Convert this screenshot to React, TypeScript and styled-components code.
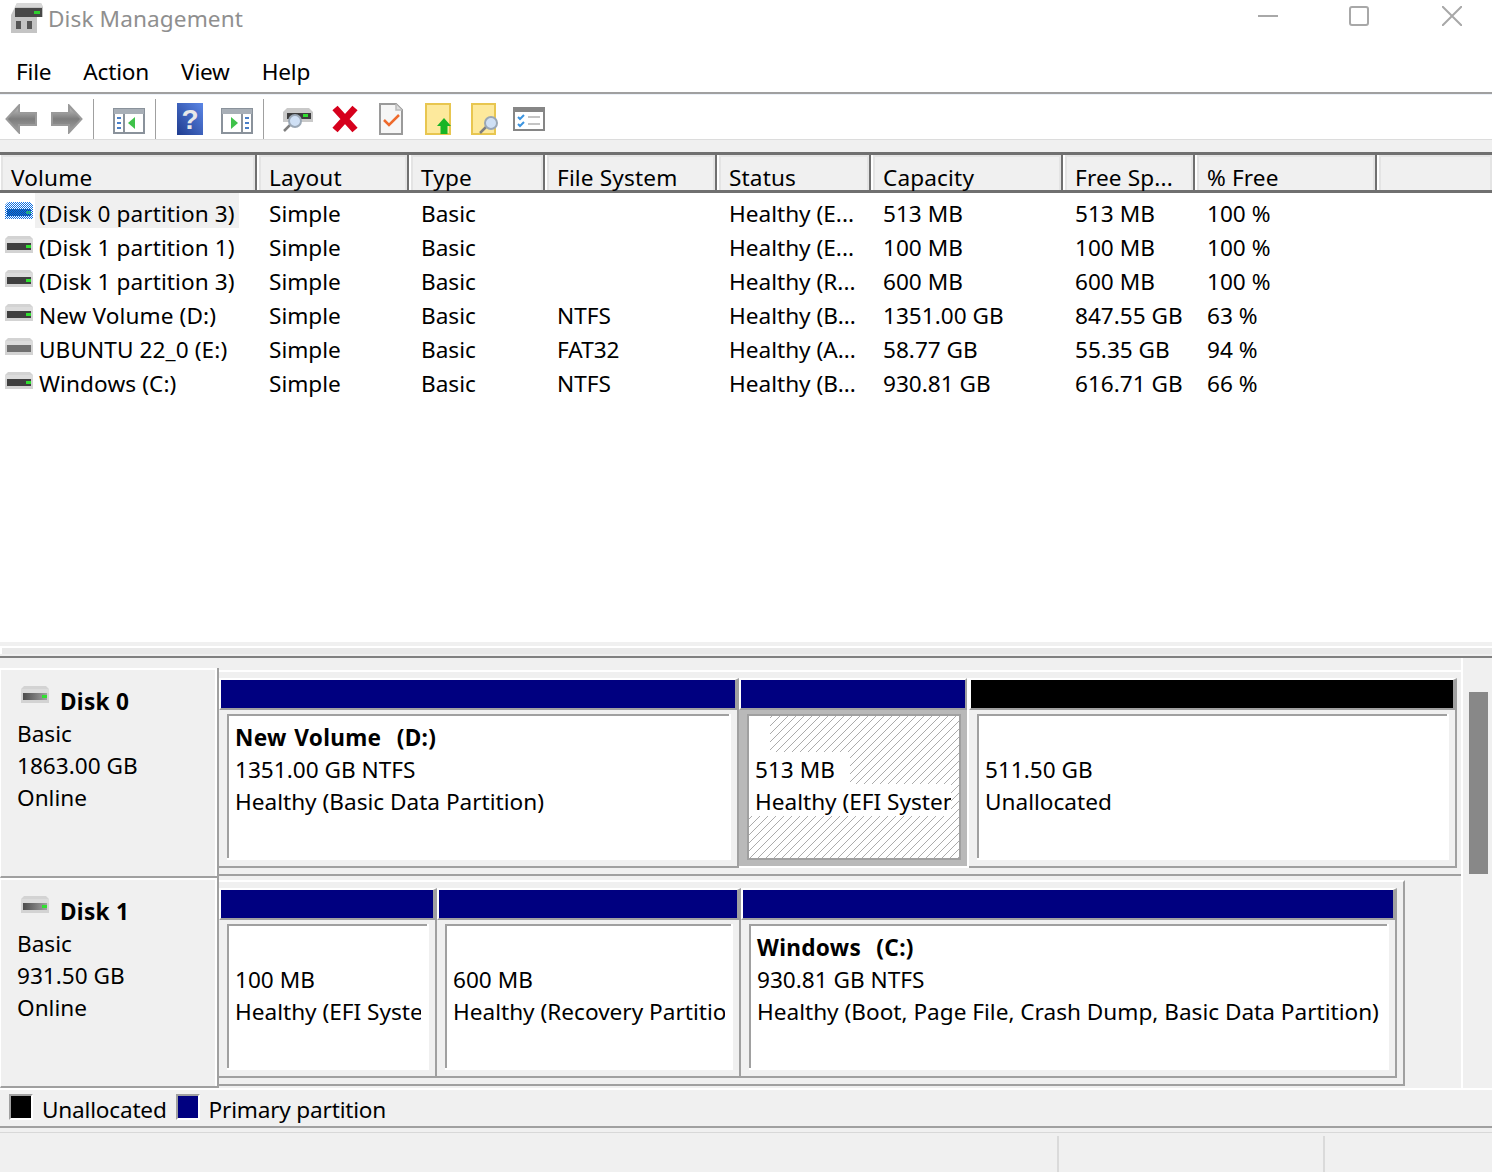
import styled, { createGlobalStyle } from "styled-components";

const GRAY = "#a0a0a0";
const FACE = "#f0f0f0";
const COLUMNS = "257px 152px 136px 172px 154px 192px 132px 182px 1fr";

const GlobalStyle = createGlobalStyle`
  html, body {
    margin: 0;
    padding: 0;
    background: #fff;
  }
  body {
    font-family: "Noto Sans", "Open Sans", sans-serif;
    font-size: 22.6px;
    color: #000;
  }
  svg {
    display: block;
  }
`;

const Window = styled.div`
  width: 1492px;
  height: 1172px;
  overflow: hidden;
  display: flex;
  flex-direction: column;
  background: ${FACE};
`;

const TitleBar = styled.div`
  height: 46px;
  box-sizing: border-box;
  padding: 3px 30px 0 11px;
  display: flex;
  align-items: flex-start;
  background: #fff;
`;

const TitleText = styled.div`
  margin-left: 5px;
  line-height: 32px;
  color: #8f8f8f;
  letter-spacing: 0.1px;
`;

const WindowControls = styled.div`
  margin: 3px 0 0 auto;
  display: flex;
`;

const MenuBar = styled.div`
  height: 48px;
  box-sizing: border-box;
  border-bottom: 2px solid ${GRAY};
  display: flex;
  align-items: center;
  background: #fff;
  padding: 6px 0 0 16px;
  gap: 32px;
  letter-spacing: -0.2px;
`;

const MenuItem = styled.span`
  line-height: 32px;
`;

const Toolbar = styled.div`
  height: 46px;
  box-sizing: border-box;
  border-top: 1px solid #edf2f9;
  border-bottom: 1px solid #dcdcdc;
  padding: 3px 0 0 5px;
  display: flex;
  align-items: center;
  background: #fff;
`;

const ToolIcon = styled.svg<{ $gap?: number }>`
  flex: none;
  margin-left: ${(p) => p.$gap ?? 0}px;
`;

const ToolSeparator = styled.div`
  width: 1px;
  height: 40px;
  margin: 0 0 0 10px;
  background: ${GRAY};
`;

const ToolGap = styled.div`
  height: 12px;
  flex: none;
`;

const HeaderRow = styled.div`
  height: 41px;
  box-sizing: border-box;
  border-top: 3px solid #707070;
  border-bottom: 3px solid #707070;
  display: grid;
  grid-template-columns: ${COLUMNS};
  grid-template-rows: 35px;
`;

const HeaderCell = styled.div`
  box-sizing: border-box;
  border-left: 2px solid #fff;
  border-right: 2px solid #707070;
  padding: 10px 0 0 10px;
  line-height: 25px;
  white-space: nowrap;
  background: ${FACE};
  box-shadow: inset 2px 2px 0 #e4e4e4, inset -2px 0 0 #e4e4e4;
  letter-spacing: 0.15px;

  &:first-child {
    border-left-width: 1px;
  }
  &:last-child {
    border-right: none;
  }
`;

const VolumeList = styled.div`
  height: 449px;
  box-sizing: border-box;
  padding-top: 4px;
  background: #fff;
`;

const VolumeRow = styled.div`
  height: 34px;
  display: grid;
  grid-template-columns: ${COLUMNS};
  line-height: 34px;
`;

const VolumeCell = styled.div`
  padding-left: 12px;
  white-space: nowrap;
`;

const NameCell = styled.div`
  padding-left: 5px;
  display: flex;
  align-items: flex-start;
`;

const DriveSlot = styled.div`
  margin-top: 5px;
  height: 17px;
`;

const NameText = styled.span<{ $selected?: boolean }>`
  margin: -4px 0 0 2px;
  padding: 4px 4px 0;
  height: 31px;
  background: ${(p) => (p.$selected ? "#f0f0f0" : "transparent")};
  white-space: nowrap;
  letter-spacing: 0.1px;
`;

const Splitter = styled.div`
  height: 16px;
  box-sizing: border-box;
  padding-top: 4px;
  border-bottom: 2px solid #808080;
`;

const SplitterBevel = styled.div`
  height: 8px;
  box-sizing: border-box;
  border-top: 2px solid #fff;
  border-left: 2px solid #fff;
  background: #e9e9e9;
`;

const DiskArea = styled.div`
  height: 430px;
  display: flex;
`;

const DiskColumn = styled.div`
  width: 1461px;
  padding-top: 10px;
  overflow: hidden;
  flex: none;
`;

const ScrollTrack = styled.div`
  flex: 1;
  box-sizing: border-box;
  border-left: 2px solid #fff;
  padding: 34px 0 0 6px;
`;

const ScrollThumb = styled.div`
  width: 19px;
  height: 182px;
  background: #888;
`;

const DiskRow = styled.div`
  height: 210px;
  display: flex;
`;

const DiskLabel = styled.div`
  width: 217px;
  flex: none;
  box-sizing: border-box;
  border-top: 2px solid #fff;
  border-left: 1px solid #fff;
  border-bottom: 2px solid ${GRAY};
  padding: 16px 0 0 16px;
  background: linear-gradient(#fff, #fff) right top / 2px 100% no-repeat, ${FACE};
  line-height: 32px;
`;

const DiskTitle = styled.div`
  display: flex;
  align-items: flex-start;
  font-weight: 700;
  letter-spacing: 0.3px;
`;

const DiskIconWrap = styled.div`
  margin: 0 11px 0 4px;
  height: 16px;
`;

const DiskSlot = styled.div`
  flex: 1;
  min-width: 0;
  box-sizing: border-box;
  border-left: 2px solid ${GRAY};
  padding: 2px 0;
`;

const DiskMap = styled.div<{ $width: number; $bordered?: boolean }>`
  width: ${(p) => p.$width}px;
  height: 206px;
  box-sizing: border-box;
  border-top: 2px solid #fff;
  border-bottom: 2px solid ${GRAY};
  border-right: ${(p) => (p.$bordered ? `2px solid ${GRAY}` : "none")};
  padding: 6px 0;
  display: flex;
`;

const Partition = styled.div<{ $width: number; $selected?: boolean }>`
  width: ${(p) => p.$width}px;
  flex: none;
  box-sizing: border-box;
  height: 190px;
  display: flex;
  flex-direction: column;
  border-right: ${(p) => (p.$selected ? "2px solid #fff" : "none")};
`;

const PartitionBar = styled.div<{ $color: string; $selected?: boolean }>`
  height: 32px;
  flex: none;
  box-sizing: border-box;
  background: ${(p) => p.$color};
  border-top: 2px solid #fff;
  border-left: 2px solid #fff;
  border-bottom: 2px solid ${GRAY};
  border-right: ${(p) => (p.$selected ? 2 : 4)}px solid ${GRAY};
`;

const PartitionBody = styled.div<{ $selected?: boolean }>`
  flex: 1;
  display: flex;
  box-sizing: border-box;
  padding: 4px 6px 6px 8px;
  background: ${(p) => (p.$selected ? "#b9b9b9" : FACE)};
  border-right: ${(p) => (p.$selected ? "none" : `2px solid ${GRAY}`)};
  border-bottom: 2px solid ${(p) => (p.$selected ? "#fff" : GRAY)};
`;

const PartitionContent = styled.div`
  flex: 1;
  min-width: 0;
  box-sizing: border-box;
  padding: 8px 0 0 2px;
  background:
    linear-gradient(${GRAY}, ${GRAY}) left top / 2px calc(100% - 2px) no-repeat,
    linear-gradient(${GRAY}, ${GRAY}) left top / calc(100% - 2px) 2px no-repeat,
    #fff;
`;

const HatchedContent = styled.div`
  flex: 1;
  min-width: 0;
  box-sizing: border-box;
  border: 2px solid ${GRAY};
  background: repeating-linear-gradient(-45deg, #ababab 0 1px, #fff 1px 5.66px);
`;

const PartitionLine = styled.div<{ $bold?: boolean }>`
  height: 32px;
  line-height: 32px;
  padding-left: 6px;
  max-width: calc(100% - 8px);
  box-sizing: border-box;
  overflow: hidden;
  white-space: pre;
  font-weight: ${(p) => (p.$bold ? 700 : 400)};
  letter-spacing: ${(p) => (p.$bold ? "0.3px" : "0")};
  word-spacing: ${(p) => (p.$bold ? "1.5px" : "0")};
`;

const HatchBlank = styled.div`
  width: 21px;
  height: 36px;
  background: #fff;
`;

const HatchLine = styled.div`
  width: fit-content;
  max-width: calc(100% - 8px);
  height: 32px;
  line-height: 36px;
  padding-left: 6px;
  box-sizing: border-box;
  overflow: hidden;
  white-space: pre;
  background: #fff;
`;

const HatchFirstLine = styled(HatchLine)`
  padding-right: 15px;
`;

const Legend = styled.div`
  height: 40px;
  box-sizing: border-box;
  border-top: 2px solid #fff;
  border-bottom: 2px solid ${GRAY};
  padding: 4px 0 0 9px;
  display: flex;
  align-items: flex-start;
  gap: 9px;
  letter-spacing: -0.2px;
`;

const LegendItem = styled.div`
  display: flex;
  align-items: flex-start;
  gap: 9px;
  line-height: 32px;
`;

const LegendSwatch = styled.div<{ $color: string }>`
  width: 24px;
  height: 26px;
  box-sizing: border-box;
  border-top: 2px solid ${GRAY};
  border-left: 2px solid ${GRAY};
  border-right: 2px solid #fff;
  border-bottom: 2px solid #fff;
  background: ${(p) => p.$color};
`;

const StatusBar = styled.div`
  margin-top: 4px;
  flex: 1;
  border-top: 1px solid #d8d8d8;
  padding-top: 3px;
  display: grid;
  grid-template-columns: 1059px 266px 1fr;
`;

const StatusCell = styled.div`
  border-right: 2px solid #dadada;
  &:last-child {
    border-right: none;
  }
`;

type DriveKind = "plain" | "selected" | "removable" | "label";

const DriveIcon = ({ kind = "plain" }: { kind?: DriveKind }) => {
  const slot = kind === "removable" ? "#707070" : kind === "label" ? "url(#driveSlot)" : "#3f3f3f";
  return (
    <svg width="28" height="17" viewBox="0 0 28 17">
      <defs>
        <linearGradient id="driveSlot" x1="0" x2="1" y1="0" y2="0">
          <stop offset="0" stopColor="#4d4d4d" />
          <stop offset="1" stopColor="#a0a0a0" />
        </linearGradient>
        <pattern id="driveDither" width="2" height="2" patternUnits="userSpaceOnUse">
          <rect width="1" height="1" fill="#0f6fe0" />
          <rect x="1" y="1" width="1" height="1" fill="#0f6fe0" />
        </pattern>
      </defs>
      <path d="M3 0H25L28 3V17H0V3Z" fill={kind === "selected" ? "#fff" : "#d3d3d3"} />
      {kind !== "selected" && <rect y="3" width="28" height="4" fill="#dcdcdc" />}
      <rect x="2" y="7" width="24" height="7" fill={kind === "selected" ? "#0c4f9c" : slot} />
      {kind !== "removable" && <rect x="21" y="9" width="5" height="3" fill="#2fe02f" />}
      {kind === "selected" && <path d="M3 0H25L28 3V17H0V3Z" fill="url(#driveDither)" />}
    </svg>
  );
};

const Arrow = ({ flip, gap }: { flip?: boolean; gap?: number }) => (
  <ToolIcon $gap={gap} width="32" height="30" viewBox="0 0 32 30">
    <defs>
      <linearGradient id="arrowFill" x1="0" x2="0" y1="0" y2="1">
        <stop offset="0" stopColor="#c4c4c4" />
        <stop offset="0.5" stopColor="#7d7d7d" />
        <stop offset="1" stopColor="#a5a5a5" />
      </linearGradient>
    </defs>
    <path
      d="M14 1.5 1.5 15 14 28.5V21H31V9H14Z"
      fill="url(#arrowFill)"
      stroke="#9a9a9a"
      strokeWidth="2"
      transform={flip ? "matrix(-1 0 0 1 32 0)" : undefined}
    />
  </ToolIcon>
);

const PaneIcon = ({ flip, gap }: { flip?: boolean; gap?: number }) => (
  <ToolIcon $gap={gap} width="32" height="30" viewBox="0 0 32 30">
    <g transform={flip ? "matrix(-1 0 0 1 32 0)" : undefined}>
      <rect x="1" y="5" width="30" height="24" fill="#fff" stroke="#8a929b" strokeWidth="2" />
      <rect x="1" y="5" width="30" height="5" fill="#a8afb7" />
      <rect x="10" y="10" width="2" height="19" fill="#8a929b" />
      <rect x="4" y="13" width="4" height="2" fill="#4a7fc8" />
      <rect x="4" y="18" width="4" height="2" fill="#4a7fc8" />
      <rect x="4" y="23" width="4" height="2" fill="#4a7fc8" />
      <path d="M22 13V25L15 19Z" fill="#3fc24a" />
    </g>
  </ToolIcon>
);

const Magnifier = ({ x, y }: { x: number; y: number }) => (
  <g transform={`translate(${x} ${y})`}>
    <path d="M1 17 8 10" stroke="#7f7f7f" strokeWidth="2.5" />
    <circle cx="12" cy="7" r="6" fill="#cfe0f5" stroke="#9aa7b5" strokeWidth="2" />
  </g>
);

const Toolbar1 = () => (
  <Toolbar>
    <Arrow />
    <Arrow flip gap={14} />
    <ToolSeparator />
    <PaneIcon gap={19} />
    <ToolSeparator />
    <ToolIcon $gap={21} width="26" height="32" viewBox="0 0 26 32">
      <defs>
        <linearGradient id="helpFill" x1="0" x2="1" y1="1" y2="0">
          <stop offset="0" stopColor="#1f3c8f" />
          <stop offset="1" stopColor="#5b86e6" />
        </linearGradient>
      </defs>
      <rect width="26" height="32" fill="url(#helpFill)" />
      <text x="13" y="26" textAnchor="middle" fontFamily="Liberation Sans" fontWeight="700" fontSize="28" fill="#e8e8e8">
        ?
      </text>
    </ToolIcon>
    <PaneIcon flip gap={18} />
    <ToolSeparator />
    <ToolIcon $gap={19} width="30" height="30" viewBox="0 0 30 30">
      <path d="M4 4H26L30 8V18H0V8Z" fill="#c9c9c9" />
      <rect x="4" y="9" width="24" height="6" fill="#3c3c3c" />
      <rect x="20" y="10" width="5" height="3" fill="#2fe02f" />
      <Magnifier x={0} y={10} />
    </ToolIcon>
    <ToolIcon $gap={18} width="28" height="30" viewBox="0 0 28 30">
      <path d="M4 4 24 26M24 4 4 26" stroke="#d6001c" strokeWidth="7" />
    </ToolIcon>
    <ToolIcon $gap={20} width="24" height="32" viewBox="0 0 24 32">
      <path d="M1 1H17L23 7V31H1Z" fill="#f6f6f6" stroke="#9a9a9a" strokeWidth="2" />
      <path d="M17 1V7H23" fill="#ddd" stroke="#bbb" strokeWidth="1.5" />
      <path d="M5 17 10 22 20 12" fill="none" stroke="#ee6a2c" strokeWidth="2.5" />
    </ToolIcon>
    <ToolIcon $gap={22} width="26" height="32" viewBox="0 0 26 32">
      <rect x="1" y="1" width="24" height="30" fill="#fde99c" stroke="#e8c650" strokeWidth="2" />
      <path d="M19 15 26 23H22.5V31H15.5V23H12Z" fill="#17b526" />
    </ToolIcon>
    <ToolIcon $gap={20} width="28" height="32" viewBox="0 0 28 32">
      <rect x="1" y="1" width="23" height="30" fill="#fde99c" stroke="#e8c650" strokeWidth="2" />
      <Magnifier x={8} y={13} />
    </ToolIcon>
    <ToolIcon $gap={14} width="32" height="24" viewBox="0 0 32 24">
      <rect x="1" y="1" width="30" height="22" fill="#fff" stroke="#868686" strokeWidth="2" />
      <rect x="1" y="1" width="30" height="4" fill="#868686" />
      <path d="M5 10 7 12 11 8M5 17 7 19 11 15" fill="none" stroke="#3b94e0" strokeWidth="2" />
      <path d="M15 10H27M15 17H27" stroke="#c4c4c4" strokeWidth="2" />
    </ToolIcon>
  </Toolbar>
);

const volumes = [
  { name: "(Disk 0 partition 3)", kind: "selected", fs: "", status: "Healthy (E...", cap: "513 MB", free: "513 MB", pct: "100 %" },
  { name: "(Disk 1 partition 1)", kind: "plain", fs: "", status: "Healthy (E...", cap: "100 MB", free: "100 MB", pct: "100 %" },
  { name: "(Disk 1 partition 3)", kind: "plain", fs: "", status: "Healthy (R...", cap: "600 MB", free: "600 MB", pct: "100 %" },
  { name: "New Volume (D:)", kind: "plain", fs: "NTFS", status: "Healthy (B...", cap: "1351.00 GB", free: "847.55 GB", pct: "63 %" },
  { name: "UBUNTU 22_0 (E:)", kind: "removable", fs: "FAT32", status: "Healthy (A...", cap: "58.77 GB", free: "55.35 GB", pct: "94 %" },
  { name: "Windows (C:)", kind: "plain", fs: "NTFS", status: "Healthy (B...", cap: "930.81 GB", free: "616.71 GB", pct: "66 %" },
] as const;

const headers = ["Volume", "Layout", "Type", "File System", "Status", "Capacity", "Free Sp...", "% Free", ""];

type PartitionInfo = { width: number; color: string; lines: string[]; title?: string };

const disks: { name: string; size: string; mapWidth: number; bordered?: boolean; parts: PartitionInfo[] }[] = [
  {
    name: "Disk 0",
    size: "1863.00 GB",
    mapWidth: 1242,
    parts: [
      { width: 520, color: "#000080", title: "New Volume  (D:)", lines: ["1351.00 GB NTFS", "Healthy (Basic Data Partition)"] },
      { width: 488, color: "#000", lines: ["511.50 GB", "Unallocated"] },
    ],
  },
  {
    name: "Disk 1",
    size: "931.50 GB",
    mapWidth: 1186,
    bordered: true,
    parts: [
      { width: 218, color: "#000080", lines: ["100 MB", "Healthy (EFI System Partition)"] },
      { width: 304, color: "#000080", lines: ["600 MB", "Healthy (Recovery Partition)"] },
      {
        width: 656,
        color: "#000080",
        title: "Windows  (C:)",
        lines: ["930.81 GB NTFS", "Healthy (Boot, Page File, Crash Dump, Basic Data Partition)"],
      },
    ],
  },
];

const PartitionBox = ({ part }: { part: PartitionInfo }) => (
  <Partition $width={part.width}>
    <PartitionBar $color={part.color} />
    <PartitionBody>
      <PartitionContent>
        <PartitionLine $bold>{part.title ?? " "}</PartitionLine>
        {part.lines.map((line) => (
          <PartitionLine key={line}>{line}</PartitionLine>
        ))}
      </PartitionContent>
    </PartitionBody>
  </Partition>
);

const SelectedPartition = () => (
  <Partition $width={230} $selected>
    <PartitionBar $color="#000080" $selected />
    <PartitionBody $selected>
      <HatchedContent>
        <HatchBlank />
        <HatchFirstLine>513 MB</HatchFirstLine>
        <HatchLine>Healthy (EFI System Partition)</HatchLine>
      </HatchedContent>
    </PartitionBody>
  </Partition>
);

const App = () => {
  return (
    <Window>
      <GlobalStyle />
      <TitleBar>
        <svg width="32" height="30" viewBox="0 0 32 30">
          <path d="M6 0H30L32 4V14H26V30H0V12Z" fill="#c4c4c4" />
          <path d="M6 0H30L32 4H4Z" fill="#d8d8d8" />
          <rect x="4" y="5" width="27" height="9" fill="#484848" />
          <rect x="23" y="8" width="6" height="3" fill="#2fd02f" />
          <rect x="5" y="18" width="5" height="8" fill="#555" />
          <rect x="16" y="18" width="5" height="8" fill="#555" />
        </svg>
        <TitleText>Disk Management</TitleText>
        <WindowControls>
          <ToolIcon width="20" height="20" viewBox="0 0 20 20">
            <path d="M0 10H20" stroke="#a8a8a8" strokeWidth="2" />
          </ToolIcon>
          <ToolIcon $gap={71} width="20" height="20" viewBox="0 0 20 20">
            <rect x="1" y="1" width="18" height="18" rx="2" fill="none" stroke="#a8a8a8" strokeWidth="2" />
          </ToolIcon>
          <ToolIcon $gap={73} width="20" height="20" viewBox="0 0 20 20">
            <path d="M0 0 20 20M20 0 0 20" stroke="#a8a8a8" strokeWidth="2" />
          </ToolIcon>
        </WindowControls>
      </TitleBar>

      <MenuBar>
        <MenuItem>File</MenuItem>
        <MenuItem>Action</MenuItem>
        <MenuItem>View</MenuItem>
        <MenuItem>Help</MenuItem>
      </MenuBar>

      <Toolbar1 />
      <ToolGap />

      <HeaderRow>
        {headers.map((h) => (
          <HeaderCell key={h}>{h}</HeaderCell>
        ))}
      </HeaderRow>

      <VolumeList>
        {volumes.map((v, i) => (
          <VolumeRow key={v.name}>
            <NameCell>
              <DriveSlot>
                <DriveIcon kind={v.kind} />
              </DriveSlot>
              <NameText $selected={i === 0}>{v.name}</NameText>
            </NameCell>
            <VolumeCell>Simple</VolumeCell>
            <VolumeCell>Basic</VolumeCell>
            <VolumeCell>{v.fs}</VolumeCell>
            <VolumeCell>{v.status}</VolumeCell>
            <VolumeCell>{v.cap}</VolumeCell>
            <VolumeCell>{v.free}</VolumeCell>
            <VolumeCell>{v.pct}</VolumeCell>
          </VolumeRow>
        ))}
      </VolumeList>

      <Splitter>
        <SplitterBevel />
      </Splitter>

      <DiskArea>
        <DiskColumn>
          {disks.map((d) => (
            <DiskRow key={d.name}>
              <DiskLabel>
                <DiskTitle>
                  <DiskIconWrap>
                    <DriveIcon kind="label" />
                  </DiskIconWrap>
                  {d.name}
                </DiskTitle>
                <div>Basic</div>
                <div>{d.size}</div>
                <div>Online</div>
              </DiskLabel>
              <DiskSlot>
                <DiskMap $width={d.mapWidth} $bordered={d.bordered}>
                  {d.name === "Disk 0" ? (
                    <>
                      <PartitionBox part={d.parts[0]} />
                      <SelectedPartition />
                      <PartitionBox part={d.parts[1]} />
                    </>
                  ) : (
                    d.parts.map((p) => <PartitionBox key={p.width} part={p} />)
                  )}
                </DiskMap>
              </DiskSlot>
            </DiskRow>
          ))}
        </DiskColumn>
        <ScrollTrack>
          <ScrollThumb />
        </ScrollTrack>
      </DiskArea>

      <Legend>
        <LegendItem>
          <LegendSwatch $color="#000" />
          Unallocated
        </LegendItem>
        <LegendItem>
          <LegendSwatch $color="#000080" />
          Primary partition
        </LegendItem>
      </Legend>

      <StatusBar>
        <StatusCell />
        <StatusCell />
        <StatusCell />
      </StatusBar>
    </Window>
  );
};

export default App;
